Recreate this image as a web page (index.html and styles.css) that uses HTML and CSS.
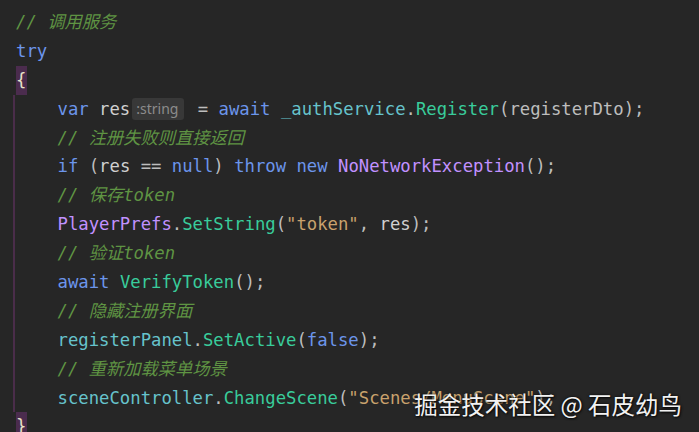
FILE: index.html
```html
<!DOCTYPE html>
<html lang="zh">
<head>
<meta charset="utf-8">
<link rel="stylesheet" href="styles.css">
</head>
<body>
<div class="editor">
  <div class="code">
    <div class="line"><span class="cm">// 调用服务</span></div>
    <div class="line"><span class="kw">try</span></div>
    <div class="line"><span class="brace">{</span></div>
    <div class="block">
      <div class="line">    <span class="kw">var</span> <span class="var">res</span><span class="hint">:string</span> = <span class="kw">await</span> <span class="fld">_authService</span>.<span class="fn">Register</span>(registerDto);</div>
      <div class="line">    <span class="cm">// 注册失败则直接返回</span></div>
      <div class="line">    <span class="kw">if</span> (<span class="var">res</span> == <span class="kw">null</span>) <span class="kw">throw</span> <span class="kw">new</span> <span class="cls">NoNetworkException</span>();</div>
      <div class="line">    <span class="cm">// 保存token</span></div>
      <div class="line">    <span class="cls">PlayerPrefs</span>.<span class="fn">SetString</span>(<span class="str">"token"</span>, <span class="var">res</span>);</div>
      <div class="line">    <span class="cm">// 验证token</span></div>
      <div class="line">    <span class="kw">await</span> <span class="fn">VerifyToken</span>();</div>
      <div class="line">    <span class="cm">// 隐藏注册界面</span></div>
      <div class="line">    <span class="fld">registerPanel</span>.<span class="fn">SetActive</span>(<span class="kw">false</span>);</div>
      <div class="line">    <span class="cm">// 重新加载菜单场景</span></div>
      <div class="line">    <span class="fld">sceneController</span>.<span class="fn">ChangeScene</span>(<span class="str">"Scenes/MenuScene"</span>);</div>
    </div>
    <div class="line"><span class="brace">}</span></div>
  </div>
  <div class="watermark">掘金技术社区 @ 石皮幼鸟</div>
</div>
</body>
</html>
```
FILE: styles.css
```css
html, body {
  margin: 0;
  padding: 0;
  background: #262626;
}
.editor {
  position: relative;
  width: 699px;
  height: 432px;
  overflow: hidden;
  background: #262626;
}
.code {
  display: flex;
  flex-direction: column;
  padding: 8px 0 0 16px;
  font-family: "DejaVu Sans Mono", "Noto Sans CJK SC", monospace;
  font-size: 17.25px;
  color: #bdbdbd;
}
.line {
  height: 28.9px;
  line-height: 28.9px;
  white-space: pre;
}
.block {
  display: flex;
  flex-direction: column;
  border-left: 2px solid #4a2d4a;
  margin-left: -3px;
  padding-left: 1px;
}
.cm {
  color: #5f9443;
  font-style: italic;
  font-family: "DejaVu Sans Mono", "Noto Sans CJK SC", monospace;
}
.kw { color: #6c95eb; }
.fn { color: #39cc9b; }
.cls { color: #c191ff; }
.str { color: #c9a26d; }
.fld { color: #66c3cc; }
.var { color: #d0d0d0; }
.brace {
  display: inline-block;
  background: #4b2c4e;
  color: #e8e2c8;
  width: 11px;
  text-align: left;
}
.hint {
  display: inline-block;
  font-family: "Noto Sans", "DejaVu Sans", sans-serif;
  font-size: 14px;
  line-height: 22px;
  color: #8c8c8c;
  background: #383838;
  border-radius: 3px;
  padding: 0 6px 0 4px;
  margin-left: 2px;
  margin-right: 3px;
  vertical-align: 1px;
}
.watermark {
  position: absolute;
  right: 17px;
  bottom: 12px;
  font-family: "Noto Sans CJK SC", sans-serif;
  font-size: 23.5px;
  line-height: 32px;
  color: #f2f2f2;
  text-shadow: 0 0 3px rgba(0,0,0,0.8), 1px 1px 2px rgba(0,0,0,0.7);
}
```
